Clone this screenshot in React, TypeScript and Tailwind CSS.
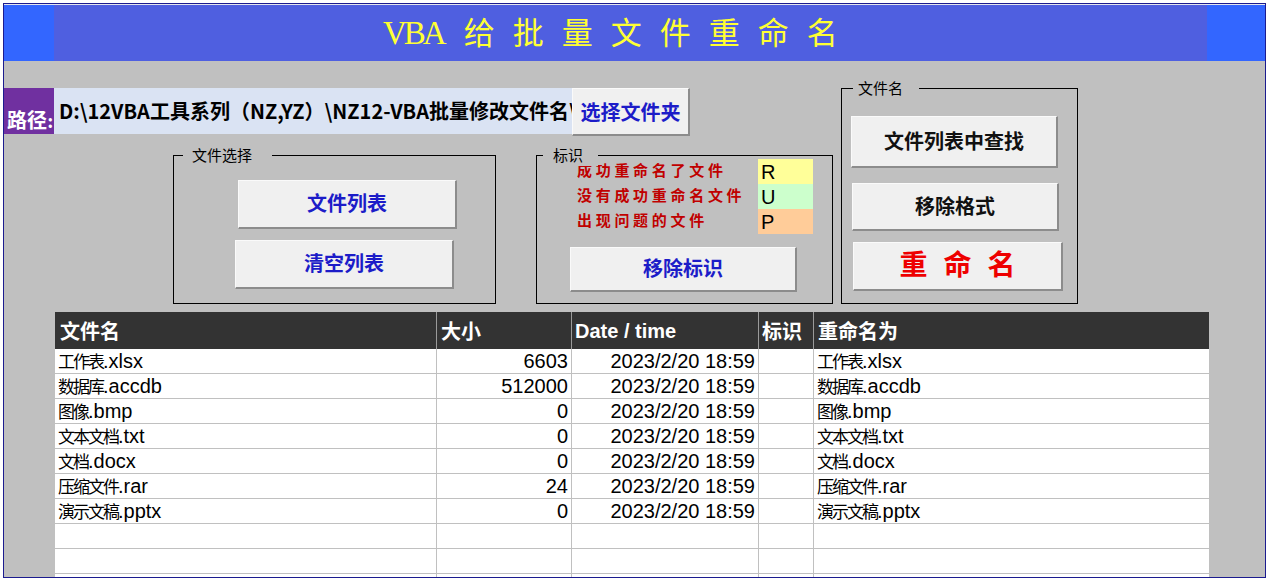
import React from 'react';

const FILES = [
  { name: '工作表.xlsx', size: 6603 },
  { name: '数据库.accdb', size: 512000 },
  { name: '图像.bmp', size: 0 },
  { name: '文本文档.txt', size: 0 },
  { name: '文档.docx', size: 0 },
  { name: '压缩文件.rar', size: 24 },
  { name: '演示文稿.pptx', size: 0 },
];

const LEGEND = [
  { text: '成功重命名了文件', code: 'R', color: 'bg-[#ffff99]' },
  { text: '没有成功重命名文件', code: 'U', color: 'bg-[#ccffcc]' },
  { text: '出现问题的文件', code: 'P', color: 'bg-[#ffcc99]' },
];

const TITLE_CHARS = ['给', '批', '量', '文', '件', '重', '命', '名'];

// Excel-style raised button
function Btn({ className = '', children }: { className?: string; children: React.ReactNode }) {
  return (
    <div
      className={`flex items-center justify-center bg-[#f0f0f0] border-t border-l border-t-[#fafafa] border-l-[#fafafa] border-r-2 border-b-2 border-r-[#8c8c8c] border-b-[#8c8c8c] font-bold ${className}`}
    >
      {children}
    </div>
  );
}

// Group box with caption sitting on the top border
function Group({
  label,
  labelClass,
  className = '',
  children,
}: {
  label: string;
  labelClass: string;
  className?: string;
  children: React.ReactNode;
}) {
  return (
    <div className={`relative border border-black ${className}`}>
      <span className={`absolute -top-[10px] bg-[#c0c0c0] text-[15px] leading-[20px] text-black ${labelClass}`}>
        {label}
      </span>
      {children}
    </div>
  );
}

// CJK runs are narrower than the Arial text in the sheet
function Mixed({ text }: { text: string }) {
  const parts = text.split(/([\u4e00-\u9fff]+)/).filter(Boolean);
  return (
    <>
      {parts.map((p, i) =>
        /[\u4e00-\u9fff]/.test(p) ? (
          <span key={i} className="text-[17px] tracking-[-2px]">
            {p}
          </span>
        ) : (
          <span key={i}>{p}</span>
        )
      )}
    </>
  );
}

export default function App() {
  const rows = [...FILES, null, null, null];

  return (
    <div className="w-[1269px] h-[581px] bg-white pt-[3px] pl-[3px] font-['Liberation_Sans','Noto_Sans_CJK_SC',sans-serif]">
      <div className="w-[1263px] h-[575px] border border-[#1b1b8f] bg-[#c0c0c0] overflow-hidden flex flex-col">
        <div className="h-[1px] bg-[#e6e6ee] shrink-0" />

        {/* Title bar */}
        <div className="flex h-[56px] shrink-0">
          <div className="w-[50px] bg-[#3366ff]" />
          <div className="flex-1 bg-[#4f5fe0] flex items-center pl-[329px] gap-[18px] pt-[2px] text-[#ffff33] text-[31px] font-['Liberation_Serif','Noto_Sans_CJK_SC',serif]">
            <span className="tracking-[-3px] text-[33px] mr-[2px]">VBA</span>
            {TITLE_CHARS.map((c, i) => (
              <span key={i}>{c}</span>
            ))}
          </div>
          <div className="w-[58px] bg-[#3366ff]" />
        </div>

        {/* Controls */}
        <div className="flex mt-[27px] shrink-0">
          <div className="w-[837px]">
            <div className="flex h-[46px] items-start">
              <div className="w-[50px] h-[46px] bg-[#7030a0] flex items-end pl-[3px] pb-[1px] text-white font-bold text-[20px] leading-[24px] font-['Liberation_Serif','Noto_Sans_CJK_SC',serif]">
                路径:
              </div>
              <div className="w-[518px] h-[46px] bg-[#dae3f3] flex items-center pl-[5px] overflow-hidden whitespace-nowrap font-bold text-[20px] text-black font-['Noto_Sans_CJK_SC',sans-serif]">
                D:\12VBA工具系列（NZ,YZ）\NZ12-VBA批量修改文件名\
              </div>
              <Btn className="w-[118px] h-[48px] text-[20px] text-[#1c1cc8] font-['Noto_Sans_CJK_SC',sans-serif]">
                选择文件夹
              </Btn>
            </div>

            <div className="flex mt-[21px]">
              <Group
                label="文件选择"
                labelClass="left-[9px] pl-[9px] pr-[20px]"
                className="ml-[169px] w-[323px] h-[149px] pt-[24px] flex flex-col gap-[11px]"
              >
                <Btn className="ml-[64px] w-[219px] h-[49px] text-[20px] text-[#1c1cc8]">文件列表</Btn>
                <Btn className="ml-[61px] w-[219px] h-[49px] text-[20px] text-[#1c1cc8]">清空列表</Btn>
              </Group>

              <Group
                label="标识"
                labelClass="left-[6px] pl-[10px] pr-[15px]"
                className="ml-[40px] w-[297px] h-[149px] pt-[3px] flex flex-col"
              >
                {LEGEND.map((l) => (
                  <div key={l.code} className="flex h-[25px]">
                    <div className="w-[221px] pl-[40px] flex items-center text-[15px] font-bold tracking-[3.7px] text-[#c00000] whitespace-nowrap">
                      {l.text}
                    </div>
                    <div className={`w-[55px] ${l.color} flex items-center pl-[3px] text-[20px] text-black`}>
                      {l.code}
                    </div>
                  </div>
                ))}
                <Btn className="ml-[33px] mt-[13px] w-[227px] h-[45px] text-[20px] text-[#1c1cc8]">移除标识</Btn>
              </Group>
            </div>
          </div>

          <Group
            label="文件名"
            labelClass="left-[11px] pl-[5px] pr-[16px]"
            className="w-[237px] h-[216px] pt-[27px] flex flex-col"
          >
            <Btn className="ml-[9px] w-[207px] h-[52px] text-[20px] text-[#111]">文件列表中查找</Btn>
            <Btn className="ml-[10px] mt-[15px] w-[207px] h-[48px] text-[20px] text-[#111]">移除格式</Btn>
            <Btn className="ml-[11px] mt-[11px] w-[210px] h-[49px] text-[28px] text-[#ee0000] gap-[16px]">
              <span>重</span>
              <span>命</span>
              <span>名</span>
            </Btn>
          </Group>
        </div>

        {/* Table */}
        <div className="mt-[8px] ml-[51px] w-[1154px] shrink-0">
          <div className="grid grid-cols-[382px_135px_187px_55px_395px] h-[37px] bg-[#333333] text-white text-[20px] font-bold">
            <div className="border-r border-[#9a9a9a] flex items-center pl-[5px] pt-[2px]">文件名</div>
            <div className="border-r border-[#9a9a9a] flex items-center pl-[4px] pt-[2px]">大小</div>
            <div className="border-r border-[#9a9a9a] flex items-center pl-[3px]">Date / time</div>
            <div className="border-r border-[#9a9a9a] flex items-center pl-[3px] pt-[2px]">标识</div>
            <div className="flex items-center pl-[4px] pt-[2px]">重命名为</div>
          </div>
          {rows.map((f, i) => (
            <div
              key={i}
              className="grid grid-cols-[382px_135px_187px_55px_395px] h-[25px] bg-white border-b border-[#c0c0c0] text-[20px] leading-[25px] text-black"
            >
              <div className="border-r border-[#c0c0c0] pl-[3px] whitespace-nowrap">{f && <Mixed text={f.name} />}</div>
              <div className="border-r border-[#c0c0c0] pr-[3px] text-right">{f && f.size}</div>
              <div className="border-r border-[#c0c0c0] pr-[3px] text-right">{f && '2023/2/20 18:59'}</div>
              <div className="border-r border-[#c0c0c0]" />
              <div className="pl-[3px] whitespace-nowrap">{f && <Mixed text={f.name} />}</div>
            </div>
          ))}
        </div>
      </div>
    </div>
  );
}
